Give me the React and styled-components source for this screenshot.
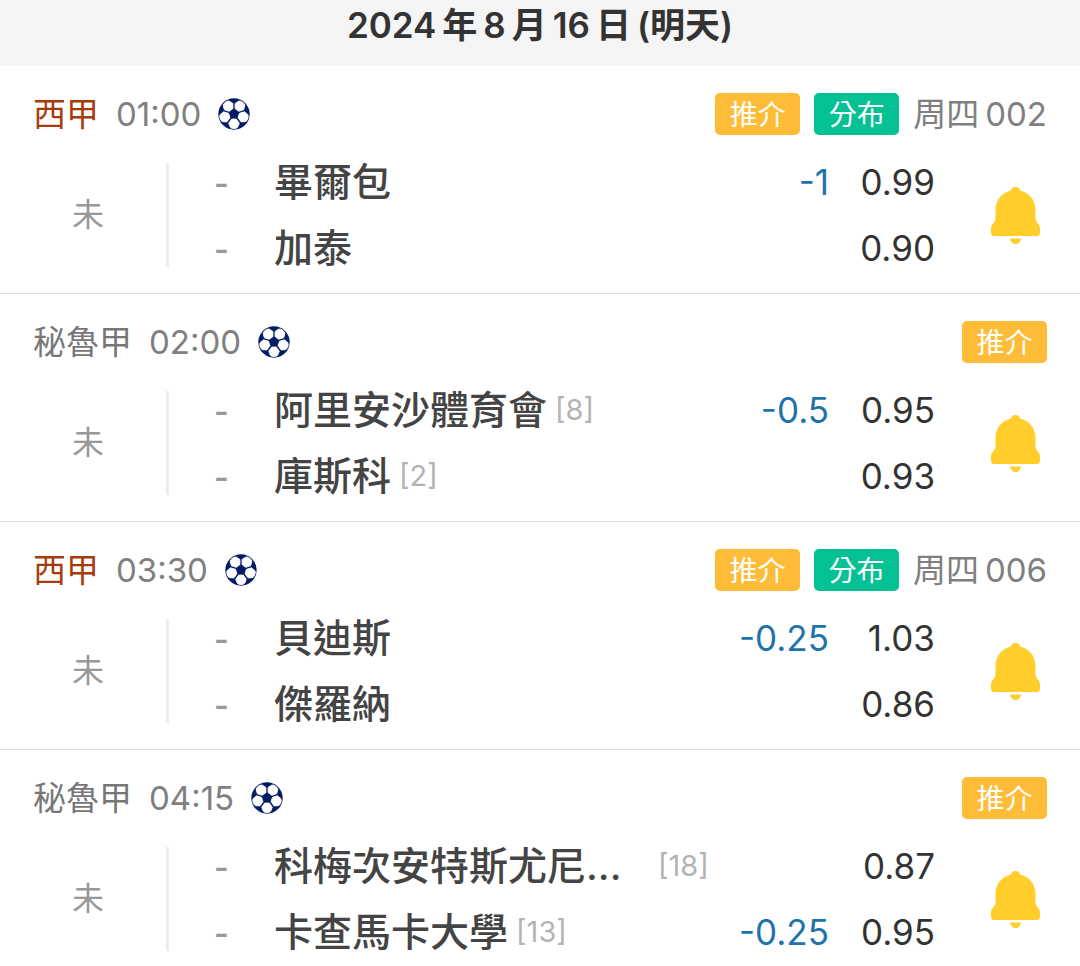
import React from "react";
import styled, { createGlobalStyle } from "styled-components";

const GlobalStyle = createGlobalStyle`
  * { box-sizing: border-box; }
  body {
    margin: 0;
    background: #ffffff;
    color: #333333;
    font-family: Inter, "Noto Sans CJK TC", sans-serif;
  }
  button { font-family: inherit; border: 0; padding: 0; cursor: pointer; }
`;

const DateHeader = styled.h1`
  display: flex;
  justify-content: center;
  gap: 6px;
  margin: 0;
  padding-bottom: 16px;
  background: #f5f5f5;
  color: #333333;
  font-size: 35px;
  line-height: 50px;
  font-weight: 600;
`;

const MatchList = styled.ul`
  margin: 0;
  padding: 0;
  list-style: none;
`;

const MatchRow = styled.li`
  padding: 27px 0 12px;
  border-bottom: 1px solid #dedede;
  &:last-child { border-bottom: 0; }
`;

const MatchHead = styled.div`
  display: flex;
  align-items: center;
  justify-content: space-between;
  height: 42px;
  margin-bottom: 14px;
  padding: 0 33px;
  color: #808080;
  font-size: 33px;
  line-height: 42px;
  white-space: nowrap;
`;

const HeadGroup = styled.div`
  display: flex;
  align-items: center;
  gap: ${(p) => p.$gap}px;
`;

const League = styled.span`
  color: ${(p) => (p.$featured ? "#a63c0c" : "#777777")};
`;

const Tag = styled.button`
  width: 85px;
  height: 42px;
  padding-top: 2px;
  border-radius: 5px;
  background: ${(p) => (p.$tone === "green" ? "#04c193" : "#ffbc38")};
  color: #ffffff;
  font-size: 28px;
  line-height: 40px;
`;

const MatchBody = styled.div`
  display: flex;
  align-items: center;
`;

const Status = styled.div`
  flex: none;
  width: 169px;
  height: 104px;
  padding-left: 10px;
  border-right: 3px solid #ececec;
  color: #999999;
  font-size: 32px;
  line-height: 104px;
  text-align: center;
`;

const Teams = styled.div`
  flex: 1;
  min-width: 0;
`;

const TeamLine = styled.div`
  display: flex;
  align-items: center;
  height: 66px;
  line-height: 66px;
  white-space: nowrap;
`;

const Score = styled.span`
  flex: none;
  width: 105px;
  padding-top: 4px;
  color: #999999;
  font-size: 32px;
  font-weight: 600;
  text-align: center;
`;

const TeamName = styled.span`
  min-width: ${(p) => (p.$clipped ? "376px" : "0")};
  color: #444444;
  font-size: 39px;
  font-weight: 500;
`;

const Rank = styled.span`
  margin-left: 8px;
  color: #b3b3b3;
  font-size: 29px;
`;

const Handicap = styled.span`
  margin-left: auto;
  color: #1f73ab;
  font-size: 35px;
`;

const Odds = styled.span`
  flex: none;
  width: 106px;
  color: #333333;
  font-size: 35px;
  text-align: right;
`;

const BellButton = styled.button`
  flex: none;
  display: flex;
  margin: 0 40px 0 56px;
  background: transparent;
`;

const Ball = () => (
  <svg width="32" height="32" viewBox="0 0 32 32" aria-hidden="true">
    <circle cx="16" cy="16" r="15.7" fill="#041c64" />
    {[0, 72, 144, 216, 288].map((angle) => (
      <path
        key={angle}
        d="M13.700 21h4.600l3 4.200-1.500 3.900q-.9 1.500-3.800 1.500t-3.800-1.500l-1.500-3.900z"
        fill="#ffffff"
        stroke="#ffffff"
        strokeWidth="0.800"
        strokeLinejoin="round"
        transform={`rotate(${angle} 16 16)`}
      />
    ))}
  </svg>
);

const Bell = () => (
  <svg width="49" height="57" viewBox="0 0 49 57" fill="#ffce2b" aria-hidden="true">
    <path d="M24.5 0C27 0 28.700 1.500 29.500 3.800C38.500 6 44.500 13.500 44.500 23V32C44.500 35.500 49 36.500 49 42V45.500Q49 49 45.500 49H3.500Q0 49 0 45.500V42C0 36.500 4.500 35.500 4.500 32V23C4.500 13.500 10.500 6 19.500 3.800C20.300 1.500 22 0 24.500 0Z" />
    <path d="M19 51.500H30C29.500 55 27.500 57 24.500 57S19.500 55 19 51.500Z" />
  </svg>
);

const dateParts = ["2024", "年", "8", "月", "16", "日", "(明天)"];

const matches = [
  {
    league: "西甲", featured: true, time: "01:00", code: ["周四", "002"],
    teams: [
      { name: "畢爾包", handicap: "-1", odds: "0.99" },
      { name: "加泰", odds: "0.90" },
    ],
  },
  {
    league: "秘魯甲", time: "02:00",
    teams: [
      { name: "阿里安沙體育會", rank: 8, handicap: "-0.5", odds: "0.95" },
      { name: "庫斯科", rank: 2, odds: "0.93" },
    ],
  },
  {
    league: "西甲", featured: true, time: "03:30", code: ["周四", "006"],
    teams: [
      { name: "貝迪斯", handicap: "-0.25", odds: "1.03" },
      { name: "傑羅納", odds: "0.86" },
    ],
  },
  {
    league: "秘魯甲", time: "04:15",
    teams: [
      { name: "科梅次安特斯尤尼...", clipped: true, rank: 18, odds: "0.87" },
      { name: "卡查馬卡大學", rank: 13, handicap: "-0.25", odds: "0.95" },
    ],
  },
];

const Match = ({ match }) => (
  <MatchRow>
    <MatchHead>
      <HeadGroup $gap={17}>
        <League $featured={match.featured}>{match.league}</League>
        <time>{match.time}</time>
        <Ball />
      </HeadGroup>
      <HeadGroup $gap={14}>
        <Tag type="button">推介</Tag>
        {match.code && <Tag type="button" $tone="green">分布</Tag>}
        {match.code && (
          <HeadGroup $gap={6}>
            <span>{match.code[0]}</span>
            <span>{match.code[1]}</span>
          </HeadGroup>
        )}
      </HeadGroup>
    </MatchHead>
    <MatchBody>
      <Status>未</Status>
      <Teams>
        {match.teams.map((team) => (
          <TeamLine key={team.name}>
            <Score>-</Score>
            <TeamName $clipped={team.clipped}>{team.name}</TeamName>
            {team.rank && <Rank>[{team.rank}]</Rank>}
            <Handicap>{team.handicap}</Handicap>
            <Odds>{team.odds}</Odds>
          </TeamLine>
        ))}
      </Teams>
      <BellButton type="button" aria-label="提醒">
        <Bell />
      </BellButton>
    </MatchBody>
  </MatchRow>
);

export default function App() {
  return (
    <main>
      <GlobalStyle />
      <DateHeader>
        {dateParts.map((part) => (
          <span key={part}>{part}</span>
        ))}
      </DateHeader>
      <MatchList>
        {matches.map((match) => (
          <Match key={match.time} match={match} />
        ))}
      </MatchList>
    </main>
  );
}
